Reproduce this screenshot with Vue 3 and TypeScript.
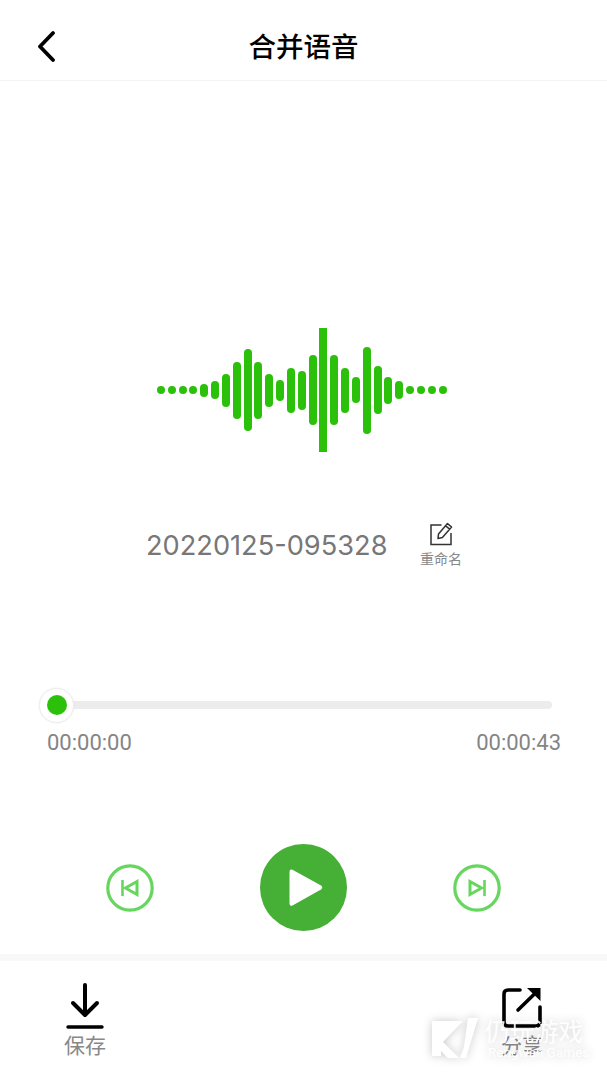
<script setup lang="ts">
const bars: number[] = [8, 8, 8, 8, 13, 18, 33, 57, 82, 57, 33, 21, 45, 39, 70, 124, 70, 45, 26, 87, 48, 27, 18, 8, 8, 8, 8]
</script>

<template>
  <div class="page">
    <header class="top">
      <svg class="back" width="20" height="32" viewBox="0 0 20 32">
        <path d="M17 3 L4 16.5 L17 30" fill="none" stroke="#000" stroke-width="3.8" stroke-linecap="round" stroke-linejoin="round" />
      </svg>
      <h1 class="title">合并语音</h1>
    </header>

    <section class="wave">
      <i
        v-for="(h, i) in bars"
        :key="i"
        class="bar"
        :class="{ square: h === 124 }"
        :style="{ height: h + 'px' }"
      ></i>
    </section>

    <section class="name-row">
      <span class="name">20220125-095328</span>
      <div class="rename">
        <svg width="24" height="24" viewBox="0 0 24 24">
          <path d="M12.5 3 H2 V22.5 H22 V11" fill="none" stroke="#333" stroke-width="1.5" />
          <path d="M9.5 12 L18.5 1.6 L22.6 5 L13.4 15.6 L9 16.6 Z M16.6 3.8 L20.7 7.2" fill="none" stroke="#333" stroke-width="1.5" stroke-linejoin="round" />
        </svg>
        <span class="rename-label">重命名</span>
      </div>
    </section>

    <section class="slider">
      <div class="track">
        <span class="thumb"><span class="dot"></span></span>
      </div>
      <div class="times">
        <span>00:00:00</span>
        <span>00:00:43</span>
      </div>
    </section>

    <section class="controls">
      <svg width="48" height="48" viewBox="0 0 48 48">
        <circle cx="24" cy="24" r="22.2" fill="none" stroke="#66d65f" stroke-width="3.2" />
        <path d="M16.5 16 V32" fill="none" stroke="#66d65f" stroke-width="2.6" />
        <path d="M31 17.5 V30.5 L19.5 24 Z" fill="none" stroke="#66d65f" stroke-width="3" stroke-linejoin="miter" />
      </svg>
      <button class="play" type="button" aria-label="播放">
        <svg width="40" height="42" viewBox="0 0 40 42">
          <path d="M4.5 5 Q4.5 1.8 7.5 2.8 L36 18.5 Q38.5 20.5 36 22.5 L7.5 38.6 Q4.5 39.6 4.5 36.5 Z" fill="#fff" />
        </svg>
      </button>
      <svg width="48" height="48" viewBox="0 0 48 48">
        <circle cx="24" cy="24" r="22.2" fill="none" stroke="#66d65f" stroke-width="3.2" />
        <path d="M31.5 16 V32" fill="none" stroke="#66d65f" stroke-width="2.6" />
        <path d="M17 17.5 V30.5 L28.5 24 Z" fill="none" stroke="#66d65f" stroke-width="3" stroke-linejoin="miter" />
      </svg>
    </section>

    <div class="strip"></div>

    <footer class="bottom">
      <div class="action">
        <svg width="38" height="46" viewBox="0 0 38 46">
          <path d="M19 2 V31 M7 20 L19 32 L31 20" fill="none" stroke="#000" stroke-width="4" stroke-linecap="round" stroke-linejoin="round" />
          <path d="M2 44 H36" fill="none" stroke="#000" stroke-width="3.4" stroke-linecap="round" />
        </svg>
        <span class="action-label">保存</span>
      </div>
      <div class="action">
        <svg width="40" height="46" viewBox="0 0 40 46">
          <path d="M18 7 H6 Q2 7 2 11 V39 Q2 43 6 43 H34 Q38 43 38 39 V24" fill="none" stroke="#000" stroke-width="3.6" stroke-linecap="round" />
          <path d="M16 27 L36 7.5" fill="none" stroke="#000" stroke-width="3.6" stroke-linecap="round" />
          <path d="M25 5 H38.5 V18 Z" fill="#000" />
        </svg>
        <span class="action-label">分享</span>
      </div>
    </footer>

    <div class="watermark">
      <svg width="46" height="40" viewBox="0 0 46 40">
        <path d="M0 3 H31 L11 24 L27 40 H16 L9 33 V38 H0 Z" fill="#fff" />
        <path d="M36 0 H46 L34 40 H28 L32 29 Z" fill="#fff" />
      </svg>
      <div class="wm-text">
        <span class="wm-cn">仍玩游戏</span>
        <span class="wm-en">Rengwan Games</span>
      </div>
    </div>
  </div>
</template>

<style scoped>
.page {
  position: relative;
  width: 607px;
  height: 1080px;
  overflow: hidden;
  background: #fff;
  display: flex;
  flex-direction: column;
  font-family: "Noto Sans CJK SC", "Noto Sans", sans-serif;
}
.top {
  position: relative;
  height: 80px;
  flex: none;
  border-bottom: 1px solid #f3f3f3;
  display: flex;
  align-items: center;
  justify-content: center;
}
.back {
  position: absolute;
  left: 36px;
  top: 30px;
}
.title {
  margin: 0;
  font-size: 27.5px;
  font-weight: 500;
  line-height: 36px;
  color: #000;
  position: relative;
  top: 5px;
}
.wave {
  margin-top: 247px;
  height: 124px;
  flex: none;
  padding-left: 157px;
  display: flex;
  align-items: center;
  gap: 2.83px;
}
.bar {
  display: block;
  width: 8px;
  flex: none;
  background: #2bc00a;
  border-radius: 4px;
}
.bar.square {
  border-radius: 0;
}
.name-row {
  margin-top: 68px;
  height: 50px;
  flex: none;
  display: flex;
  padding-left: 146px;
}
.name {
  font-family: Inter, sans-serif;
  font-size: 27.2px;
  line-height: 50px;
  color: #777;
  margin-top: 1px;
  width: 272px;
}
.rename {
  width: 46px;
  display: flex;
  flex-direction: column;
  align-items: center;
  padding-top: 2px;
}
.rename-label {
  font-size: 14px;
  line-height: 18px;
  color: #888;
  margin-top: 3px;
  white-space: nowrap;
}
.slider {
  margin-top: 118px;
  height: 70px;
  flex: none;
  padding: 0 46px 0 47px;
}
.track {
  position: relative;
  margin: 13px 9px 0 9px;
  height: 8px;
  border-radius: 4px;
  background: #ececec;
}
.thumb {
  position: absolute;
  left: -17px;
  top: -13.5px;
  width: 35px;
  height: 35px;
  box-sizing: border-box;
  border-radius: 50%;
  background: #fff;
  border: 1px solid #eee;
  box-shadow: 0 0 2px rgba(0, 0, 0, 0.08);
  display: flex;
  align-items: center;
  justify-content: center;
}
.dot {
  width: 20px;
  height: 20px;
  border-radius: 50%;
  background: #2bc00a;
}
.times {
  display: flex;
  justify-content: space-between;
  margin-top: 20px;
  font-family: Roboto, sans-serif;
  font-size: 22px;
  line-height: 28px;
  color: #858585;
}
.controls {
  margin-top: 86px;
  height: 87px;
  flex: none;
  padding-left: 106px;
  display: flex;
  align-items: center;
}
.play {
  width: 87px;
  height: 87px;
  margin: 0 106px;
  padding: 0 0 0 2px;
  border: 0;
  border-radius: 50%;
  background: #46b036;
  display: flex;
  align-items: center;
  justify-content: center;
}
.strip {
  margin-top: 23px;
  height: 7px;
  flex: none;
  background: #f8f8f8;
}
.bottom {
  flex: 1;
  display: flex;
  justify-content: space-between;
  padding: 22px 45px 0 45px;
}
.action {
  width: 80px;
  display: flex;
  flex-direction: column;
  align-items: center;
}
.action-label {
  font-size: 21px;
  line-height: 30px;
  color: #888;
}
.watermark {
  position: absolute;
  left: 432px;
  top: 1016px;
  display: flex;
  gap: 7px;
  align-items: flex-start;
  color: rgba(255, 255, 255, 0.92);
  filter: drop-shadow(0 0 5px rgba(0, 0, 0, 0.22));
}
.watermark svg {
  margin-top: 2px;
}
.wm-text {
  display: flex;
  flex-direction: column;
  align-items: flex-start;
}
.wm-cn {
  font-size: 24.5px;
  line-height: 29px;
  white-space: nowrap;
}
.wm-en {
  font-family: Roboto, sans-serif;
  font-size: 13.5px;
  line-height: 15px;
  white-space: nowrap;
  margin-left: 3px;
}
</style>
